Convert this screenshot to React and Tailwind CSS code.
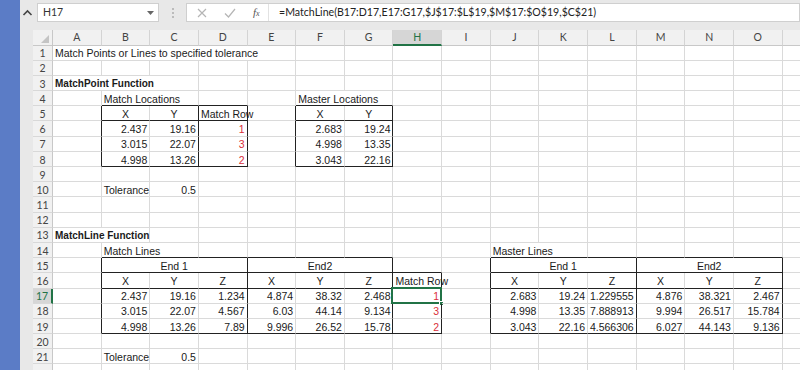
import React from 'react';

const COLS = ['A', 'B', 'C', 'D', 'E', 'F', 'G', 'H', 'I', 'J', 'K', 'L', 'M', 'N', 'O'];
const ROW_COUNT = 22;

// cell contents: c = column index (A = 0), span = columns the text covers
const cells = {
  1: [{ c: 0, span: 5, t: 'Match Points or Lines to specified tolerance' }],
  3: [{ c: 0, span: 3, t: 'MatchPoint Function', b: true }],
  4: [{ c: 1, span: 2, t: 'Match Locations' }, { c: 5, span: 2, t: 'Master Locations' }],
  5: [
    { c: 1, t: 'X', a: 'c' }, { c: 2, t: 'Y', a: 'c' }, { c: 3, t: 'Match Row' },
    { c: 5, t: 'X', a: 'c' }, { c: 6, t: 'Y', a: 'c' },
  ],
  6: [
    { c: 1, t: '2.437', a: 'r' }, { c: 2, t: '19.16', a: 'r' }, { c: 3, t: '1', a: 'r', red: true },
    { c: 5, t: '2.683', a: 'r' }, { c: 6, t: '19.24', a: 'r' },
  ],
  7: [
    { c: 1, t: '3.015', a: 'r' }, { c: 2, t: '22.07', a: 'r' }, { c: 3, t: '3', a: 'r', red: true },
    { c: 5, t: '4.998', a: 'r' }, { c: 6, t: '13.35', a: 'r' },
  ],
  8: [
    { c: 1, t: '4.998', a: 'r' }, { c: 2, t: '13.26', a: 'r' }, { c: 3, t: '2', a: 'r', red: true },
    { c: 5, t: '3.043', a: 'r' }, { c: 6, t: '22.16', a: 'r' },
  ],
  10: [{ c: 1, t: 'Tolerance' }, { c: 2, t: '0.5', a: 'r' }],
  13: [{ c: 0, span: 2, t: 'MatchLine Function', b: true }],
  14: [{ c: 1, span: 2, t: 'Match Lines' }, { c: 9, span: 2, t: 'Master Lines' }],
  15: [
    { c: 1, span: 3, t: 'End 1', a: 'c' }, { c: 4, span: 3, t: 'End2', a: 'c' },
    { c: 9, span: 3, t: 'End 1', a: 'c' }, { c: 12, span: 3, t: 'End2', a: 'c' },
  ],
  16: [
    { c: 1, t: 'X', a: 'c' }, { c: 2, t: 'Y', a: 'c' }, { c: 3, t: 'Z', a: 'c' },
    { c: 4, t: 'X', a: 'c' }, { c: 5, t: 'Y', a: 'c' }, { c: 6, t: 'Z', a: 'c' },
    { c: 7, t: 'Match Row' },
    { c: 9, t: 'X', a: 'c' }, { c: 10, t: 'Y', a: 'c' }, { c: 11, t: 'Z', a: 'c' },
    { c: 12, t: 'X', a: 'c' }, { c: 13, t: 'Y', a: 'c' }, { c: 14, t: 'Z', a: 'c' },
  ],
  21: [{ c: 1, t: 'Tolerance' }, { c: 2, t: '0.5', a: 'r' }],
};

const matchLines = [
  ['2.437', '19.16', '1.234', '4.874', '38.32', '2.468', '1'],
  ['3.015', '22.07', '4.567', '6.03', '44.14', '9.134', '3'],
  ['4.998', '13.26', '7.89', '9.996', '26.52', '15.78', '2'],
];
const masterLines = [
  ['2.683', '19.24', '1.229555', '4.876', '38.321', '2.467'],
  ['4.998', '13.35', '7.888913', '9.994', '26.517', '15.784'],
  ['3.043', '22.16', '4.566306', '6.027', '44.143', '9.136'],
];
matchLines.forEach((vals, i) => {
  const row = vals.map((t, j) => ({ c: j + 1, t, a: 'r', red: j === 6 }));
  masterLines[i].forEach((t, j) => row.push({ c: j + 9, t, a: 'r' }));
  cells[17 + i] = row;
});

// black borders: bottom edge of a cell, right edge of a cell
const hBlack = new Set();
const vBlack = new Set();
const hline = (r, c1, c2) => { for (let c = c1; c <= c2; c++) hBlack.add(`${r},${c}`); };
const vline = (c, r1, r2) => { for (let r = r1; r <= r2; r++) vBlack.add(`${r},${c}`); };
const box = (r1, r2, c1, c2) => {
  hline(r1 - 1, c1, c2);
  hline(r2, c1, c2);
  vline(c1 - 1, r1, r2);
  vline(c2, r1, r2);
};

box(5, 8, 1, 3); hline(5, 1, 3); vline(2, 5, 8);
box(5, 8, 5, 6); hline(5, 5, 6);
box(15, 19, 1, 6); hline(15, 1, 6); hline(16, 1, 6); vline(3, 15, 19);
box(16, 19, 7, 7); hline(16, 7, 7);
box(15, 19, 9, 14); hline(15, 9, 14); hline(16, 9, 14); vline(11, 15, 19);

const uiFont = { fontFamily: 'Lato, "Open Sans", sans-serif' };
const sheetFont = { fontFamily: '"Liberation Sans", Arial, sans-serif' };

function Cell({ r, c, span = 1, cell }) {
  const last = c + span - 1;
  const bottom = hBlack.has(`${r},${c}`) ? 'border-b-[#222]' : 'border-b-[#dadada]';
  const right = vBlack.has(`${r},${last}`) ? 'border-r-[#222]' : 'border-r-[#dadada]';
  const align = !cell ? '' : cell.a === 'r' ? 'justify-end' : cell.a === 'c' ? 'justify-center' : 'justify-start';
  const spanCls = { 1: '', 2: 'col-span-2', 3: 'col-span-3', 5: 'col-span-5' }[span];
  const selected = r === 17 && c === 7;
  return (
    <div className={`relative flex items-end pb-[1px] px-[2px] border-r border-b whitespace-nowrap ${spanCls} ${bottom} ${right} ${align}`}>
      {cell && (
        <span
          className={`leading-none ${cell.b ? 'font-bold text-[10px]' : 'text-[10.5px]'} ${cell.red ? 'text-[#d9303a]' : 'text-[#1a1a1a]'}`}
          style={sheetFont}
        >
          {cell.t}
        </span>
      )}
      {selected && (
        <div className="absolute -top-[2px] -left-[2px] -right-[1px] -bottom-[1px] border-2 border-[#217346]">
          <div className="absolute -right-[4px] -bottom-[4px] w-[5px] h-[5px] bg-[#217346] border border-white" />
        </div>
      )}
    </div>
  );
}

function SheetRow({ r }) {
  const list = cells[r] || [];
  const out = [];
  const active = r === 17;
  out.push(
    <div
      key="h"
      className={`flex items-end justify-center pb-[1px] text-[10.5px] leading-none border-b border-b-[#d8d8d8] ${
        active ? 'bg-[#d6d6d6] text-[#217346] border-r-2 border-r-[#217346]' : 'bg-[#f1f1f1] text-[#444] border-r border-r-[#c8c8c8]'
      }`}
    >
      {r < ROW_COUNT ? r : ''}
    </div>
  );
  let c = 0;
  while (c < COLS.length) {
    const cell = list.find((x) => x.c === c);
    const span = cell?.span || 1;
    out.push(<Cell key={c} r={r} c={c} span={span} cell={cell} />);
    c += span;
  }
  out.push(<div key="p" className="border-b border-b-[#dadada]" />);
  return out;
}

export default function App() {
  return (
    <div className="w-[800px] h-[370px] overflow-hidden flex bg-[#e8e8e8] text-[11px]" style={uiFont}>
      {/* ribbon edge */}
      <div className="w-[20px] shrink-0 bg-[#5b7cc6]" />

      <div className="flex-1 flex flex-col min-w-0">
        {/* formula bar */}
        <div className="h-[30px] shrink-0 flex items-start pt-[3px] text-[#333]">
          <svg width="17" height="19" viewBox="0 0 17 19" className="shrink-0">
            <path d="M3.5 12 L7.5 8 L11.5 12" fill="none" stroke="#444" strokeWidth="1.6" />
          </svg>
          <div className="w-[122px] h-[19px] bg-white border border-[#cfcfcf] flex items-center pl-[5px] pr-[4px] justify-between">
            <span className="text-[10.5px]">H17</span>
            <svg width="7" height="4" viewBox="0 0 7 4"><path d="M0 0 H7 L3.5 4 Z" fill="#666" /></svg>
          </div>
          <div className="w-[27px] h-[19px] flex flex-col items-center justify-center gap-[2px]">
            <div className="w-[2px] h-[2px] bg-[#bbb]" />
            <div className="w-[2px] h-[2px] bg-[#bbb]" />
            <div className="w-[2px] h-[2px] bg-[#bbb]" />
          </div>
          <div className="flex-1 h-[19px] bg-white border border-[#cfcfcf] flex items-center">
            <div className="w-[82px] shrink-0 flex items-center justify-around pl-[2px] border-r border-[#e2e2e2] h-full">
              <svg width="10" height="10" viewBox="0 0 10 10">
                <path d="M1 1 L9 9 M9 1 L1 9" stroke="#b5b5b5" strokeWidth="1.2" />
              </svg>
              <svg width="12" height="10" viewBox="0 0 12 10">
                <path d="M1 5.5 L4.5 9 L11 1" fill="none" stroke="#b5b5b5" strokeWidth="1.2" />
              </svg>
              <span className="italic text-[11px] text-[#555]" style={{ fontFamily: '"Liberation Serif", serif' }}>
                f<span className="text-[8px]">x</span>
              </span>
            </div>
            <span className="pl-[10px] text-[10.6px] text-[#222] whitespace-nowrap">
              =MatchLine(B17:D17,E17:G17,$J$17:$L$19,$M$17:$O$19,$C$21)
            </span>
          </div>
        </div>

        {/* sheet */}
        <div className="flex-1 flex pl-[13px] min-h-0">
          <div className="flex-1 bg-white grid grid-cols-[20px_repeat(15,48.65px)_1fr] grid-rows-[15.5px_repeat(22,15.2px)]">
            <div className="relative bg-[#f1f1f1] border-r border-b border-[#c8c8c8]">
              <svg width="8" height="8" viewBox="0 0 8 8" className="absolute right-[3px] bottom-[2px]">
                <path d="M8 0 V8 H0 Z" fill="#c4c4c4" />
              </svg>
            </div>
            {COLS.map((l, i) => (
              <div
                key={l}
                className={`flex items-center justify-center text-[10.5px] leading-none border-r border-r-[#d4d4d4] ${
                  i === 7 ? 'bg-[#d6d6d6] text-[#217346] border-b-2 border-b-[#217346]' : 'bg-[#f1f1f1] text-[#444] border-b border-b-[#c8c8c8]'
                }`}
              >
                {l}
              </div>
            ))}
            <div className="bg-[#f1f1f1] border-b border-b-[#c8c8c8]" />
            {Array.from({ length: ROW_COUNT }, (_, i) => (
              <SheetRow key={i} r={i + 1} />
            ))}
          </div>
        </div>
      </div>
    </div>
  );
}
